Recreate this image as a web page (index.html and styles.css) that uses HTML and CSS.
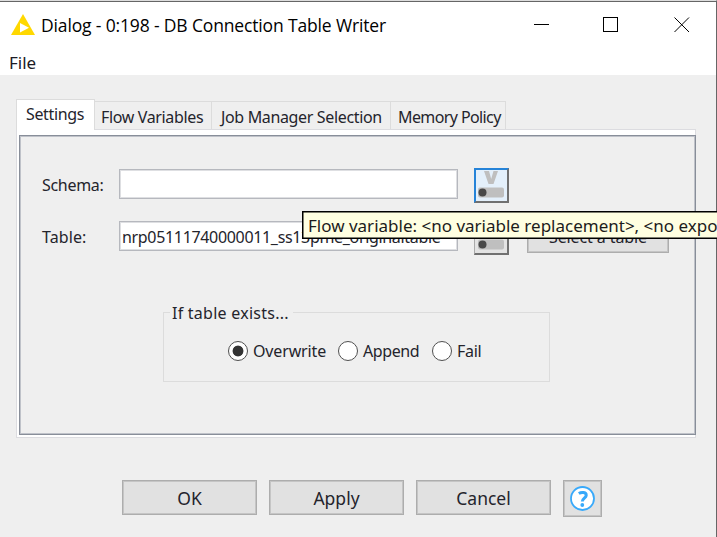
FILE: index.html
```html
<!DOCTYPE html>
<html lang="en">
<head>
<meta charset="utf-8">
<title>Dialog - 0:198 - DB Connection Table Writer</title>
<link rel="stylesheet" href="styles.css">
</head>
<body>
<div class="window">
  <header class="titlebar">
    <svg class="logo" width="24" height="22" viewBox="0 0 24 22"><path d="M12 0L24 21H0Z" fill="#ffd800"/><path d="M9 9L18 13.800L9 18.500Z" fill="#fff"/></svg>
    <h1 class="title"><span class="t-title">Dialog - 0:198 - DB Connection Table Writer</span></h1>
    <svg class="controls" width="156" height="16" viewBox="0 0 156 16" fill="none" stroke="#000" shape-rendering="crispEdges"><path d="M0 7.500H15M69.500 .5H83.500V14.500H69.500Z"/><path d="M140.500 .5L155 15M155 .5L140.500 15" shape-rendering="auto" stroke-width="1"/></svg>
  </header>
  <nav class="menubar"><span class="t-file">File</span></nav>
  <main class="content">
    <div class="tabs">
      <div class="tab selected"><span class="t-settings">Settings</span></div>
      <div class="tab flow"><span class="t-flow">Flow Variables</span></div>
      <div class="tab job"><span class="t-job">Job Manager Selection</span></div>
      <div class="tab memory"><span class="t-memory">Memory Policy</span></div>
    </div>
    <section class="pane">
      <div class="panel">
        <div class="row">
          <label class="label"><span class="t-schema">Schema:</span></label>
          <div class="field"></div>
          <div class="varbtn active"><svg width="33" height="32" viewBox="0 0 33 32"><path d="M9 2H14L16.200 10L18.500 2H23L18.500 15H13.500Z" fill="#bfbfbf"/><rect x="3" y="18.500" width="26" height="10" rx="2" fill="#bfbfbf"/><circle cx="7.500" cy="23.500" r="4" fill="#484848"/></svg></div>
        </div>
        <div class="row second">
          <label class="label"><span class="t-table">Table:</span></label>
          <div class="field"><span class="t-value">nrp05111740000011_ss13pme_originaltable</span></div>
          <div class="varbtn"><svg width="33" height="32" viewBox="0 0 33 32"><path d="M9 2H14L16.200 10L18.500 2H23L18.500 15H13.500Z" fill="#bfbfbf"/><rect x="3" y="18.500" width="26" height="10" rx="2" fill="#bfbfbf"/><circle cx="7.500" cy="23.500" r="4" fill="#484848"/></svg></div>
          <div class="button select"><span class="t-select">Select a table</span></div>
        </div>
        <div class="group">
          <div class="legend"><span class="t-legend">If table exists...</span></div>
          <div class="radios">
            <i class="radio on"></i><span class="choice t-over">Overwrite</span>
            <i class="radio"></i><span class="choice t-append">Append</span>
            <i class="radio"></i><span class="choice t-fail">Fail</span>
          </div>
        </div>
      </div>
    </section>
    <footer class="actions">
      <div class="button"><span class="t-ok">OK</span></div>
      <div class="button"><span class="t-apply">Apply</span></div>
      <div class="button"><span class="t-cancel">Cancel</span></div>
      <div class="button help"><svg width="26" height="26" viewBox="0 0 26 26"><circle cx="12.500" cy="12.500" r="11.500" fill="#fff" stroke="#38a9fa" stroke-width="1.800"/><path d="M8.800 7.500C11.500 5.800 16.500 6 16.200 9.500C16 12 12.300 12.500 12.300 15.500" fill="none" stroke="#38a9fa" stroke-width="3"/><circle cx="12.300" cy="19" r="1.900" fill="#38a9fa"/></svg></div>
    </footer>
  </main>
</div>
<div class="tooltip"><span class="t-tip">Flow variable: &lt;no variable replacement&gt;, &lt;no export&gt;</span></div>
</body>
</html>
```
FILE: styles.css
```css
* { box-sizing: border-box; }
body { margin: 0; font: 16px/20px "Noto Sans", sans-serif; color: #24242c; overflow: hidden; }
.window { position: relative; width: 717px; height: 537px; overflow: hidden; background: #efefef; border-top: 1px solid #ddd; border-right: 1px solid #666; }
.titlebar { display: flex; align-items: flex-start; height: 49px; background: #fff; border-top: 1px solid #666; padding: 0 26px 0 11px; }
.logo { margin-top: 12px; }
.title { margin: 11px auto 0 6px; font: 17.5px/24px "Open Sans", sans-serif; color: #000; letter-spacing: -.15px; white-space: nowrap; }
.controls { margin-top: 15px; }
.menubar { height: 25px; background: #fff; padding: 3px 0 0 9px; font-size: 17px; color: #1b1b25; }
.content { padding: 24px 20px 0 16px; }
.tabs { display: flex; align-items: flex-end; height: 30px; }
.tab { height: 28px; border: 1px solid #dcdcdc; border-left: 0; border-bottom: 0; padding: 5px 0 0 6px; white-space: nowrap; }
.selected { width: 79px; height: 31px; background: #fff; border-left: 1px solid #dcdcdc; padding: 4px 0 0 9px; margin-bottom: -1px; z-index: 1; }
.flow { width: 117px; }
.job { width: 179px; padding-left: 9px; }
.memory { width: 115px; padding-left: 7px; }
.pane { height: 309px; width: 680px; background: #fff; border: 1px solid #dcdce0; padding: 5px 0 2px 2px; }
.panel { height: 300px; width: 677px; background: #efefef; border: 1px solid #888e99; box-shadow: inset 0 0 0 1px #bfc2c9; padding: 32px 0 0 21px; }
.row { display: flex; align-items: flex-start; height: 35px; }
.second { margin-top: 17px; }
.label { width: 78px; padding: 7px 0 0 1px; }
.t-schema { letter-spacing: -.3px; }
.t-table { letter-spacing: .1px; }
.field { width: 339px; height: 30px; margin-top: 1px; border: 1px solid #b6b8be; outline: 1px solid #dedfe2; outline-offset: -2px; background: #fff; padding: 5px 0 0 2px; white-space: nowrap; }
.t-value { letter-spacing: -.33px; }
.varbtn { width: 35px; height: 35px; margin-left: 16px; border: 1px solid #aaa; border-right: 2px solid #707070; border-bottom: 2px solid #707070; background: #e3e3e3; }
.varbtn svg { display: block; }
.active { border-top: 2px solid #2583d8; border-left: 2px solid #2583d8; background: #e4f0fb; }
.active svg { margin: -1px 0 0 -1px; }
.button { display: flex; align-items: center; justify-content: center; width: 135px; height: 35px; background: #e1e1e1; border: 1px solid #adadad; box-shadow: inset 0 0 0 1px #c5c5c5; white-space: nowrap; }
.select { width: 142px; height: 32px; margin-left: 18px; margin-top: 1px; }
.t-select { letter-spacing: -.1px; }
.group { width: 387px; height: 70px; margin: 57px 0 0 122px; border: 1px solid #dcdcdc; }
.legend { width: 123px; height: 20px; margin: -10px 0 0 6px; padding-left: 2px; background: #efefef; letter-spacing: .25px; white-space: nowrap; }
.radios { display: flex; align-items: center; height: 20px; margin: 18px 0 0 64px; }
.radio { flex: none; width: 20px; height: 20px; border: 1.5px solid #505050; border-radius: 50%; background: #fff; }
.on { background: radial-gradient(circle, #333 0 5px, #fff 5.8px); }
.choice { margin-left: 5px; white-space: nowrap; }
.t-over { width: 85px; letter-spacing: -.15px; }
.t-append { width: 69px; letter-spacing: -.4px; }
.t-fail { letter-spacing: -.3px; }
.actions { display: flex; gap: 12px; margin: 42px 0 0 106px; font-size: 17.5px; }
.help { width: 39px; height: 37px; }
.tooltip { position: absolute; left: 302px; top: 211px; width: 440px; height: 28px; border: 1px solid #000; box-shadow: inset 0 0 0 .5px #000; background: #ffffe1; padding: 4px 0 0 5px; font-size: 17px; color: #1c1c1c; white-space: nowrap; }
.t-flow, .t-job, .t-settings { letter-spacing: -.35px; }
.t-memory { letter-spacing: -.6px; }
```
